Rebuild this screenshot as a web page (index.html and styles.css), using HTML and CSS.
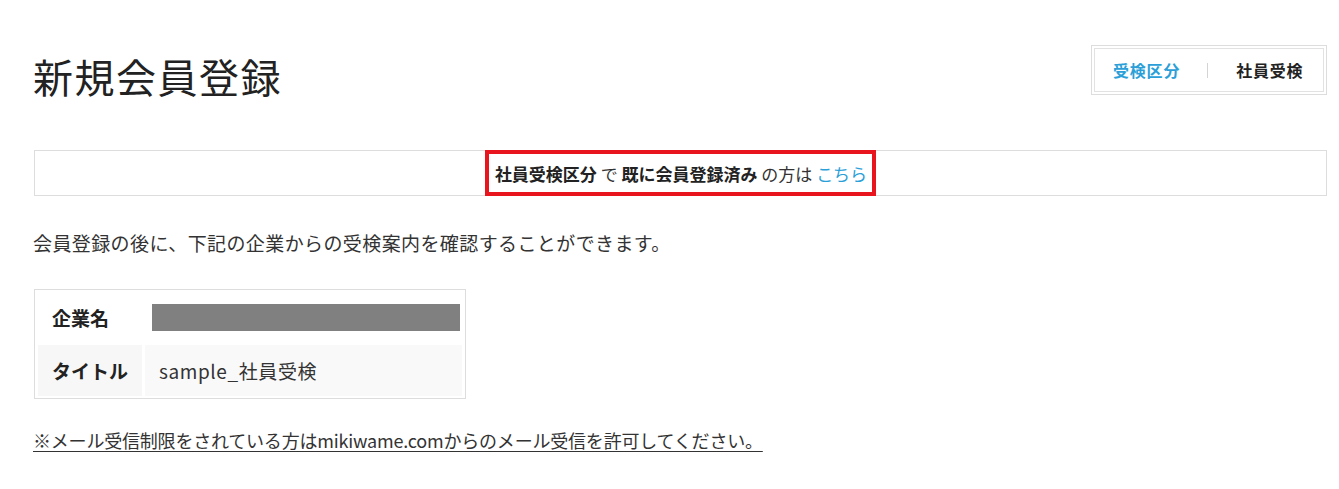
FILE: index.html
```html
<!DOCTYPE html>
<html lang="ja">
<head>
<meta charset="utf-8">
<title>新規会員登録</title>
<link rel="stylesheet" href="styles.css">
</head>
<body>
<div class="page">
  <header class="head">
    <h1 class="title">新規会員登録</h1>
    <div class="type-box">
      <div class="type-inner">
        <span class="type-label">受検区分</span>
        <span class="type-sep"></span>
        <span class="type-value">社員受検</span>
      </div>
    </div>
  </header>

  <div class="notice">
    <div class="notice-mark">
      <b>社員受検区分</b> で <b>既に会員登録済み</b> の方は <a class="link" href="#">こちら</a>
    </div>
  </div>

  <p class="lead">会員登録の後に、下記の企業からの受検案内を確認することができます。</p>

  <table class="info">
    <tr class="row-a">
      <th>企業名</th>
      <td><div class="masked"></div></td>
    </tr>
    <tr class="row-b">
      <th>タイトル</th>
      <td>sample_社員受検</td>
    </tr>
  </table>

  <a class="mail-note" href="#">※メール受信制限をされている方はmikiwame.comからのメール受信を許可してください。</a>
</div>
</body>
</html>
```

FILE: styles.css
```css
* { box-sizing: border-box; }
html, body { margin: 0; padding: 0; background: #fff; }
body {
  font-family: "Noto Sans CJK JP", "Noto Sans", sans-serif;
  color: #333;
}
.page {
  padding: 45px 12px 0 34px;
}
.head {
  display: flex;
  justify-content: space-between;
  align-items: flex-start;
}
.title {
  margin: 7px 0 0 -1px;
  font-size: 40px;
  font-weight: 400;
  line-height: 48px;
  color: #222;
  letter-spacing: 1.5px;
}
.type-box {
  border: 1px solid #ddd;
  padding: 2px;
}
.type-inner {
  border: 1px solid #e2e2e2;
  height: 44px;
  width: 230px;
  display: flex;
  align-items: center;
  padding-left: 18px;
  font-size: 16px;
  font-weight: 700;
  letter-spacing: 0.8px;
}
.type-label { color: #2b9fd8; }
.type-sep {
  width: 1px;
  height: 15px;
  background: #d4d4d4;
  margin: 0 28px 0 27px;
}
.type-value { color: #222; }

.notice {
  margin-top: 50px;
  border: 1px solid #ddd;
  height: 46px;
  display: flex;
  justify-content: center;
}
.notice-mark {
  margin: -1px 0;
  border: 4px solid #e8141e;
  padding: 0 5px 0 6px;
  display: flex;
  align-items: center;
  font-size: 17px;
  color: #333;
  white-space: pre;
}
.notice-mark b { font-weight: 700; color: #222; }
.link { color: #2b9fd8; text-decoration: none; }

.lead {
  margin: 34px 0 0 -1px;
  font-size: 19px;
  line-height: 26px;
  color: #333;
  letter-spacing: 0.4px;
}

.info {
  margin-top: 33px;
  border: 1px solid #ddd;
  border-spacing: 3px 2px;
  width: 432px;
}
.info th, .info td {
  height: 51px;
  padding: 0;
  font-size: 19px;
  text-align: left;
  vertical-align: middle;
}
.info th {
  width: 104px;
  padding-left: 14px;
  font-weight: 700;
  color: #222;
}
.info td {
  padding-left: 14px;
  color: #333;
  letter-spacing: 0.6px;
}
.row-b th { background: #f7f7f7; }
.row-b td { background: #f9f9f9; }
.masked {
  margin-left: -7px;
  margin-right: 2px;
  height: 27px;
  background: #808080;
}

.mail-note {
  display: inline-block;
  margin: 28px 0 0 -1px;
  font-size: 18px;
  line-height: 26px;
  color: #333;
  letter-spacing: -0.2px;
  text-decoration: underline;
  text-underline-offset: 3px;
}
```
